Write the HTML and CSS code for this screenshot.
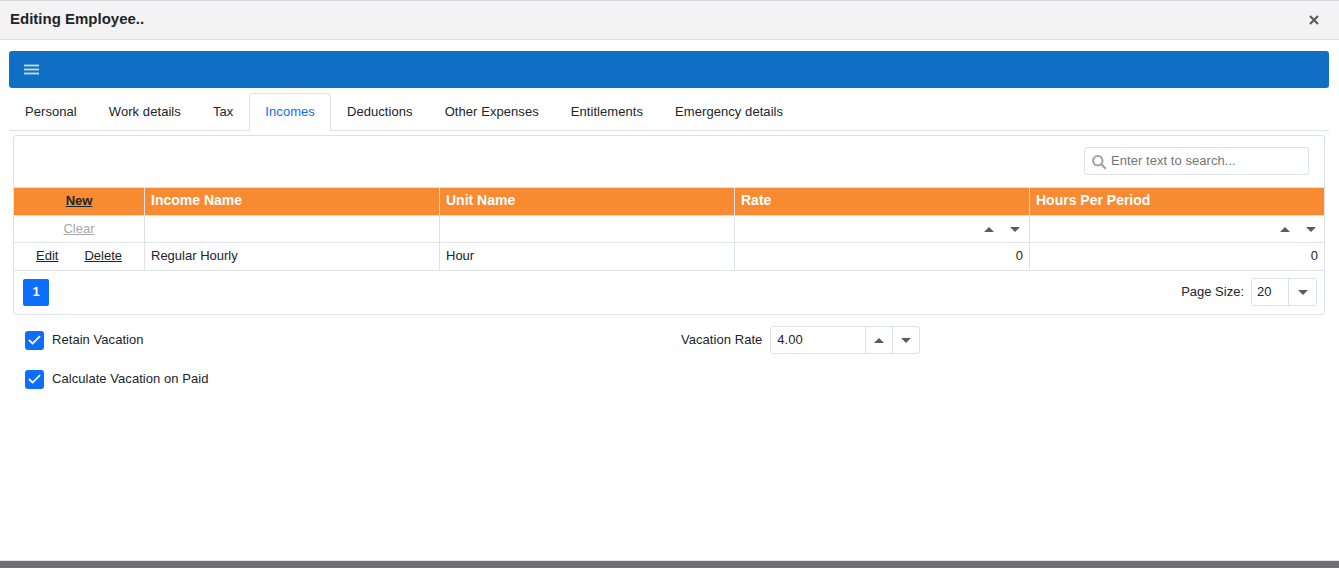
FILE: index.html
```
<!DOCTYPE html>
<html lang="en">
<head>
  <meta charset="UTF-8" />
  <meta name="viewport" content="width=device-width, initial-scale=1.0"/>
  <title>Editing Employee</title>
  <link rel="stylesheet" href="styles.css">
</head>
<body>
  <div class="popup">
    <div class="popup-header">
      <h2>Editing Employee..</h2>
      <button class="close-btn" aria-label="Close">
        <svg width="10" height="10" viewBox="0 0 10 10"><path d="M1 1l8 8M9 1l-8 8"/></svg>
      </button>
    </div>

    <div class="popup-body">
      <div class="toolbar">
        <button class="menu-btn" aria-label="Menu"><span></span><span></span><span></span></button>
      </div>

      <ul class="tabs">
        <li class="tab">Personal</li>
        <li class="tab">Work details</li>
        <li class="tab">Tax</li>
        <li class="tab active">Incomes</li>
        <li class="tab">Deductions</li>
        <li class="tab">Other Expenses</li>
        <li class="tab">Entitlements</li>
        <li class="tab">Emergency details</li>
      </ul>

      <div class="grid">
        <div class="search-panel">
          <div class="search-box">
            <svg width="15" height="15" viewBox="0 0 15 15"><circle cx="5.8" cy="5.8" r="4.7"/><path d="M9.2 9.2l4.6 4.6"/></svg>
            <input type="text" placeholder="Enter text to search..." />
          </div>
        </div>

        <table>
          <colgroup>
            <col class="col-command"><col><col><col><col class="col-last">
          </colgroup>
          <thead>
            <tr>
              <th class="command"><a href="#">New</a></th>
              <th>Income Name</th>
              <th>Unit Name</th>
              <th>Rate</th>
              <th>Hours Per Period</th>
            </tr>
          </thead>
          <tbody>
            <tr class="filter-row">
              <td class="command"><a href="#" class="disabled">Clear</a></td>
              <td></td>
              <td></td>
              <td><div class="spin"><i class="arrow up"></i><i class="arrow down"></i></div></td>
              <td><div class="spin"><i class="arrow up"></i><i class="arrow down"></i></div></td>
            </tr>
            <tr class="data-row">
              <td class="command"><a href="#">Edit</a><a href="#" class="delete">Delete</a></td>
              <td>Regular Hourly</td>
              <td>Hour</td>
              <td class="number">0</td>
              <td class="number">0</td>
            </tr>
          </tbody>
        </table>

        <div class="pager">
          <b class="page">1</b>
          <label for="pageSize">Page Size:</label>
          <div class="editor page-size">
            <input type="text" id="pageSize" value="20" />
            <button aria-label="Open"><i class="arrow down"></i></button>
          </div>
        </div>
      </div>

      <div class="options">
        <div class="check">
          <span class="box"><svg width="13" height="10" viewBox="0 0 13 10"><path d="M1 5l3.6 3.6L12 1.2"/></svg></span>
          Retain Vacation
        </div>
        <div class="rate">
          <label for="vacationRate">Vacation Rate</label>
          <div class="editor">
            <input type="text" id="vacationRate" value="4.00" />
            <button aria-label="Increase"><i class="arrow up"></i></button>
            <button aria-label="Decrease"><i class="arrow down"></i></button>
          </div>
        </div>
        <div class="check">
          <span class="box"><svg width="13" height="10" viewBox="0 0 13 10"><path d="M1 5l3.6 3.6L12 1.2"/></svg></span>
          Calculate Vacation on Paid
        </div>
      </div>
    </div>
  </div>
</body>
</html>
```
FILE: styles.css
```
* {
  margin: 0;
  padding: 0;
  box-sizing: border-box;
}

body {
  background: #707070;
  color: #212529;
  font-family: "Liberation Sans", Arial, sans-serif;
  font-size: 13px;
  line-height: 18px;
  overflow: hidden;
}

a {
  color: inherit;
}

input,
button {
  font: inherit;
  color: inherit;
  border: none;
  background: none;
  outline: none;
}

.popup {
  height: 561px;
  background: #fff;
  border-top: 1px solid #d5d9de;
  border-bottom: 1px solid #dee2e6;
}

.popup-header {
  display: flex;
  justify-content: space-between;
  align-items: center;
  height: 39px;
  padding: 0 20px 0 10px;
  background: #f3f3f3;
  border-bottom: 1px solid #dee2e6;
}

.popup-header h2 {
  font-size: 15px;
  line-height: 20px;
  margin-top: -2px;
}

.close-btn {
  display: flex;
  margin-top: -1px;
}

.close-btn path {
  stroke: #5a5d60;
  stroke-width: 2.2;
}

.popup-body {
  padding: 11px 10px 0 9px;
}

.toolbar {
  display: flex;
  align-items: center;
  height: 37px;
  padding-left: 15px;
  background: #0f6fc5;
  border-radius: 3px;
}

.menu-btn {
  display: flex;
  flex-direction: column;
  gap: 1px;
  width: 15px;
}

.menu-btn span {
  height: 3px;
  background: #c3dbf1;
  border: solid #5a9cd8;
  border-width: 1px 0;
}

/* Tabs */
.tabs {
  display: flex;
  height: 38px;
  margin-top: 5px;
  list-style: none;
  letter-spacing: 0.065px;
  border-bottom: 1px solid #dee2e6;
}

.tab {
  height: 38px;
  padding: 9px 15px 0;
  border: 1px solid transparent;
  border-bottom: none;
}

.tab.active {
  color: #0d6efd;
  background: #fff;
  border-color: #dee2e6;
  border-radius: 4px 4px 0 0;
}

/* Grid */
.grid {
  width: 1312px;
  height: 180px;
  margin: 4px 0 0 4px;
  border: 1px solid #dee2e6;
  border-radius: 3px;
}

.search-panel {
  display: flex;
  justify-content: flex-end;
  height: 52px;
  padding: 11px 15px 0 0;
  border-bottom: 1px solid #dee2e6;
}

.search-box {
  display: flex;
  align-items: center;
  width: 225px;
  height: 28px;
  padding-left: 7px;
  border: 1px solid #dee2e6;
  border-radius: 3px;
}

.search-box svg {
  fill: none;
  stroke: #a0a0a0;
  stroke-width: 2;
  margin-top: 2px;
}

.search-box input {
  width: 180px;
  margin-left: 4px;
  letter-spacing: 0.05px;
}

.search-box input::placeholder {
  color: #757575;
}

table {
  width: 1310px;
  table-layout: fixed;
  border-collapse: separate;
  border-spacing: 0;
}

.col-command {
  width: 131px;
}

.col-last {
  width: 294px;
}

th, td {
  height: 28px;
  padding: 0 6px;
  text-align: left;
  border-right: 1px solid #dee2e6;
  border-bottom: 1px solid #dee2e6;
}

th:last-child,
td:last-child {
  border-right: none;
}

th {
  padding-bottom: 4px;
  color: #fff;
  font-size: 14px;
  background: #f88a31;
}

.filter-row td {
  height: 27px;
}

.data-row td {
  padding-bottom: 1px;
}

.command {
  text-align: center;
}

th.command {
  padding-bottom: 2px;
  color: #212529;
  font-size: 13px;
}

.disabled {
  color: #a6a8a9;
}

.delete {
  margin-left: 26px;
}

.number {
  text-align: right;
}

.spin {
  display: flex;
  justify-content: flex-end;
  gap: 16px;
  padding-right: 3px;
}

td:last-child .spin {
  padding-right: 2px;
}

.arrow {
  width: 10px;
  border: 5px solid transparent;
}

.arrow.up {
  border-top: none;
  border-bottom-color: #5a5d60;
}

.arrow.down {
  border-bottom: none;
  border-top-color: #5a5d60;
}

.pager {
  display: flex;
  align-items: center;
  padding: 7px 7px 0 9px;
}

.page {
  width: 26px;
  height: 27px;
  line-height: 25px;
  text-align: center;
  color: #fff;
  background: #0d6efd;
  border-radius: 2px;
}

.pager label {
  margin: 0 7px 0 auto;
}

.editor {
  display: flex;
  width: 150px;
  height: 28px;
  border: 1px solid #dee2e6;
  border-radius: 3px;
}

.editor input {
  flex: 1;
  min-width: 0;
  padding: 0 6px 1px;
}

.editor button {
  display: flex;
  align-items: center;
  justify-content: center;
  width: 27px;
  border-left: 1px solid #dee2e6;
}

.page-size {
  width: 66px;
}

.page-size input {
  padding-left: 5px;
}

.page-size button {
  width: 28px;
}

/* Vacation options */
.options {
  display: grid;
  grid-template-columns: 656px 1fr;
  row-gap: 11px;
  margin-top: 11px;
  padding-left: 16px;
  letter-spacing: 0.05px;
}

.check {
  display: flex;
  align-items: center;
  gap: 8px;
  height: 28px;
}

.box {
  display: flex;
  align-items: center;
  justify-content: center;
  width: 19px;
  height: 19px;
  background: #0d6efd;
  border-radius: 3px;
}

.box path {
  fill: none;
  stroke: #fff;
  stroke-width: 1.8;
}

.rate {
  display: flex;
  align-items: center;
}

.rate label {
  margin-right: 8px;
}
```
